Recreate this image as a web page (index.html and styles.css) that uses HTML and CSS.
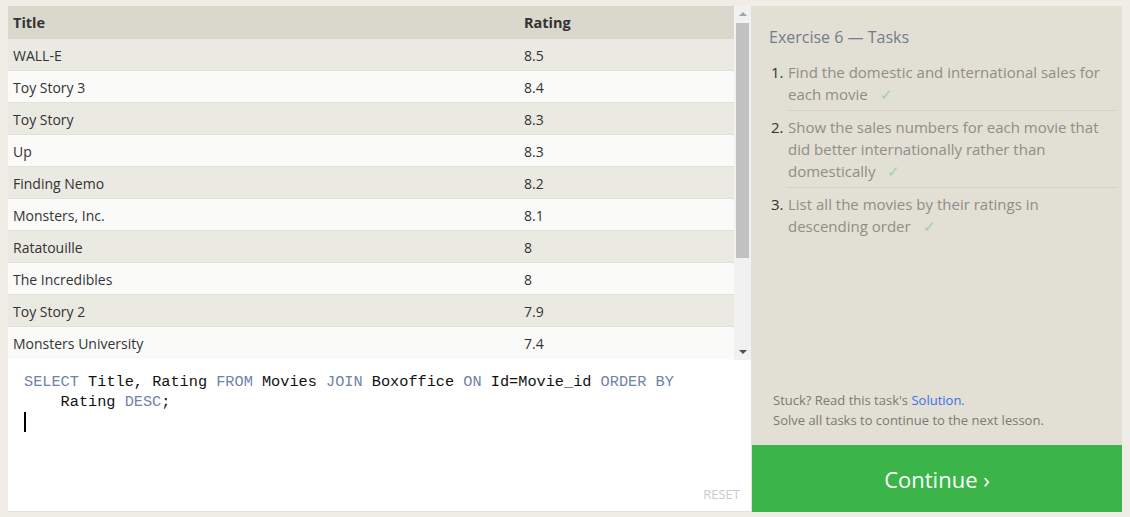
FILE: index.html
```html
<!DOCTYPE html>
<html>
<head>
<meta charset="utf-8">
<link rel="stylesheet" href="styles.css">
</head>
<body>
<div class="app">
  <div class="left">
    <div class="results">
      <div class="table">
        <div class="row head"><div class="c1">Title</div><div class="c2">Rating</div></div>
        <div class="row odd"><div class="c1">WALL-E</div><div class="c2">8.5</div></div>
        <div class="row even"><div class="c1">Toy Story 3</div><div class="c2">8.4</div></div>
        <div class="row odd"><div class="c1">Toy Story</div><div class="c2">8.3</div></div>
        <div class="row even"><div class="c1">Up</div><div class="c2">8.3</div></div>
        <div class="row odd"><div class="c1">Finding Nemo</div><div class="c2">8.2</div></div>
        <div class="row even"><div class="c1">Monsters, Inc.</div><div class="c2">8.1</div></div>
        <div class="row odd"><div class="c1">Ratatouille</div><div class="c2">8</div></div>
        <div class="row even"><div class="c1">The Incredibles</div><div class="c2">8</div></div>
        <div class="row odd"><div class="c1">Toy Story 2</div><div class="c2">7.9</div></div>
        <div class="row even"><div class="c1">Monsters University</div><div class="c2">7.4</div></div>
      </div>
      <div class="scrollbar">
        <div class="arrow up"></div>
        <div class="thumb"></div>
        <div class="spacer"></div>
        <div class="arrow down"></div>
      </div>
    </div>
    <div class="editor">
      <div class="code"><span class="kw">SELECT</span> Title, Rating <span class="kw">FROM</span> Movies <span class="kw">JOIN</span> Boxoffice <span class="kw">ON</span> Id=Movie_id <span class="kw">ORDER BY</span></div>
      <div class="code indent">Rating <span class="kw">DESC</span>;</div>
      <div class="code"><span class="cursor"></span></div>
      <div class="reset">RESET</div>
    </div>
  </div>
  <div class="right">
    <div class="tasks">
      <div class="ex-title">Exercise 6 — Tasks</div>
      <ol class="list">
        <li class="task"><span class="num">1.</span><span class="txt">Find the domestic and international sales for each movie <span class="check">✓</span></span></li>
        <li class="task"><span class="num">2.</span><span class="txt">Show the sales numbers for each movie that did better internationally rather than domestically <span class="check">✓</span></span></li>
        <li class="task last"><span class="num">3.</span><span class="txt">List all the movies by their ratings in descending order <span class="check">✓</span></span></li>
      </ol>
    </div>
    <div class="notes">
      <div>Stuck? Read this task's <span class="link">Solution</span>.</div>
      <div>Solve all tasks to continue to the next lesson.</div>
    </div>
    <div class="continue">Continue ›</div>
  </div>
</div>
</body>
</html>
```
FILE: styles.css
```css
html, body {
  margin: 0;
  padding: 0;
  background: #efede6;
  font-family: "Open Sans", "Noto Sans", sans-serif;
}
body {
  padding: 6px 8px 5px 8px;
  width: 1130px;
  height: 517px;
  box-sizing: border-box;
}
.app {
  display: flex;
  height: 506px;
}
.left {
  width: 743px;
  display: flex;
  flex-direction: column;
  background: #fff;
}
.results {
  display: flex;
  height: 354px;
}
.table {
  width: 726px;
  display: flex;
  flex-direction: column;
}
.row {
  display: flex;
  box-sizing: border-box;
  height: 32px;
  padding-top: 1px;
  align-items: center;
  border-bottom: 1px solid #e3e2da;
  font-size: 14px;
  color: #333;
}
.row.head {
  height: 33px;
  padding-top: 0;
  border-bottom: none;
  background: #d9d8cd;
  font-weight: 700;
  font-size: 14.5px;
}
.row.odd { background: #eae9e2; }
.row.even { background: #fafaf9; }
.row:last-child { border-bottom: none; }
.c1 { width: 511px; padding-left: 5px; }
.c2 { flex: 1; }
.scrollbar {
  width: 17px;
  background: #f1f1f1;
  display: flex;
  flex-direction: column;
  align-items: center;
}
.arrow {
  width: 0;
  height: 0;
  border-left: 4px solid transparent;
  border-right: 4px solid transparent;
}
.arrow.up {
  margin-top: 6px;
  border-bottom: 4px solid #a3a3a3;
}
.arrow.down {
  margin-bottom: 6px;
  border-top: 4px solid #505050;
}
.thumb {
  margin-top: 7px;
  width: 13px;
  height: 235px;
  background: #c1c1c1;
}
.spacer { flex: 1; }
.editor {
  flex: 1;
  background: #fff;
  border-bottom: 1px solid #e3e2d8;
  padding: 12px 0 0 16px;
  display: flex;
  flex-direction: column;
}
.code {
  font-family: "Liberation Mono", "DejaVu Sans Mono", monospace;
  font-size: 15.25px;
  line-height: 20px;
  height: 20px;
  color: #111;
  white-space: pre;
}
.code.indent { padding-left: 36.6px; }
.kw { color: #6f82ab; }
.cursor {
  display: inline-block;
  width: 2px;
  height: 20px;
  background: #000;
  vertical-align: top;
}
.reset {
  margin-top: auto;
  align-self: flex-end;
  margin-right: 11px;
  margin-bottom: 8px;
  font-size: 13px;
  color: #cbcbcb;
}
.right {
  flex: 1;
  background: #e2dfd4;
  display: flex;
  flex-direction: column;
}
.tasks {
  padding: 20px 6px 0 18px;
}
.ex-title {
  font-size: 16px;
  line-height: 22px;
  color: #717d8c;
}
.list {
  list-style: none;
  margin: 8px 0 0 0;
  padding: 0;
}
.task {
  display: flex;
  font-size: 15px;
  line-height: 22px;
}
.num {
  box-sizing: border-box;
  width: 19px;
  padding-left: 2px;
  color: #333;
  padding-top: 5px;
}
.txt {
  flex: 1;
  padding: 5px 10px 5px 0;
  color: #8f8e87;
  border-bottom: 1px solid #d3d0c4;
}
.task.last .txt { border-bottom: none; }
.check {
  color: #9fd29d;
  margin-left: 8px;
}
.notes {
  margin-top: auto;
  padding: 0 0 15px 22px;
  font-size: 13px;
  line-height: 20px;
  color: #7b7a74;
}
.link { color: #3d6fe8; }
.continue {
  height: 67px;
  margin-left: 1px;
  background: #3bb54a;
  color: #fff;
  font-size: 22px;
  display: flex;
  align-items: center;
  justify-content: center;
}
```
